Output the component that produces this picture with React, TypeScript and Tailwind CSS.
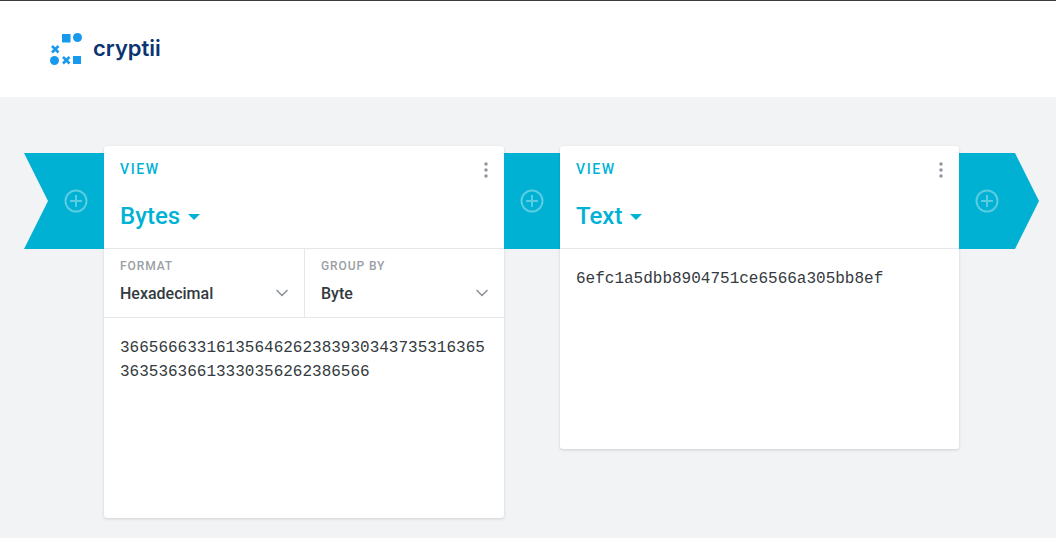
import { ChevronDown } from "lucide-react";

function PlusCircle() {
  return (
    <svg width="24" height="24" viewBox="0 0 24 24" fill="none" stroke="#ffffff" strokeOpacity="0.35" strokeWidth="2">
      <circle cx="12" cy="12" r="10.5" />
      <path d="M12 6v12M6 12h12" />
    </svg>
  );
}

function Logo() {
  return (
    <svg width="32" height="32" viewBox="0 0 32 32" fill="#1899ee">
      <rect x="12" y="1" width="8.5" height="8.5" />
      <circle cx="27.5" cy="4.5" r="4.5" />
      <path d="M2 13l6.5 6.5M8.5 13l-6.5 6.5" stroke="#1899ee" strokeWidth="2.6" fill="none" />
      <circle cx="4.5" cy="27.5" r="4.5" />
      <path d="M13 24l6.5 6.5M19.5 24l-6.5 6.5" stroke="#1899ee" strokeWidth="2.6" fill="none" />
      <rect x="23" y="23" width="8" height="8" />
    </svg>
  );
}

function Dots() {
  return (
    <svg className="absolute top-[15px] right-[14px]" width="8" height="18" viewBox="0 0 8 18" fill="#8f959c">
      <circle cx="4" cy="3" r="1.7" />
      <circle cx="4" cy="9" r="1.7" />
      <circle cx="4" cy="15" r="1.7" />
    </svg>
  );
}

function Header({ title }: { title: string }) {
  return (
    <div className="relative h-[103px] border-b border-[#e5e7eb] pl-4">
      <div className="pt-[15px] text-[14px] leading-[16px] font-medium tracking-[1.6px] text-[#00b2d6]">VIEW</div>
      <div className="mt-[23px] flex items-center gap-[8px] text-[24px] leading-[32px] font-medium text-[#00b2d6]">
        {title}
        <span className="mt-[2px] h-0 w-0 border-x-[6.5px] border-t-[6px] border-x-transparent border-t-[#00b2d6]" />
      </div>
      <Dots />
    </div>
  );
}

function Select({ label, value, className }: { label: string; value: string; className: string }) {
  return (
    <div className={`relative h-[68px] pl-4 ${className}`}>
      <div className="pt-[10px] text-[12px] leading-[14px] font-medium tracking-[0.9px] text-[#9aa0a6]">{label}</div>
      <div className="mt-[9px] text-[16px] leading-[24px] font-medium text-[#343a40]">{value}</div>
      <ChevronDown className="absolute top-[34px] right-[12px] text-[#8f959c]" size={20} strokeWidth={2} />
    </div>
  );
}

const mono = "font-['Liberation_Mono',monospace] text-[16px] leading-[24px] text-[#343a40]";

export default function App() {
  return (
    <div className="h-[538px] w-[1056px] overflow-hidden bg-[#f2f3f5] font-['Roboto',sans-serif]">
      <header className="flex h-[97px] items-center gap-[11px] border-t border-[#3c3c3c] bg-white pl-[50px]">
        <Logo />
        <span className="-mt-[2px] font-['Inter',sans-serif] text-[22px] leading-none font-semibold text-[#0b3570]">cryptii</span>
      </header>
      <main className="flex items-start pt-[49px] pl-[24px]">
        <div className="mt-[7px] flex h-[96px] w-[80px] items-center justify-end bg-[#00b1d3] pr-[16px] [clip-path:polygon(0_0,100%_0,100%_100%,0_100%,24px_50%)]">
          <PlusCircle />
        </div>
        <section className="h-[372px] w-[400px] rounded-[3px] bg-white shadow-[0_1px_3px_rgba(0,0,0,0.15)]">
          <Header title="Bytes" />
          <div className="grid grid-cols-[201px_199px] border-b border-[#e5e7eb]">
            <Select label="FORMAT" value="Hexadecimal" className="border-r border-[#e5e7eb]" />
            <Select label="GROUP BY" value="Byte" className="" />
          </div>
          <div className={`px-4 pt-[18px] break-all ${mono}`}>
            36656663316135646262383930343735316365
            <br />
            36353636613330356262386566
          </div>
        </section>
        <div className="mt-[7px] flex h-[96px] w-[56px] items-center justify-center bg-[#00b1d3]">
          <PlusCircle />
        </div>
        <section className="h-[303px] w-[399px] rounded-[3px] bg-white shadow-[0_1px_3px_rgba(0,0,0,0.15)]">
          <Header title="Text" />
          <div className={`px-4 pt-[18px] ${mono}`}>6efc1a5dbb8904751ce6566a305bb8ef</div>
        </section>
        <div className="mt-[7px] flex h-[96px] w-[80px] items-center justify-start bg-[#00b1d3] pl-[16px] [clip-path:polygon(0_0,56px_0,100%_50%,56px_100%,0_100%)]">
          <PlusCircle />
        </div>
      </main>
    </div>
  );
}
